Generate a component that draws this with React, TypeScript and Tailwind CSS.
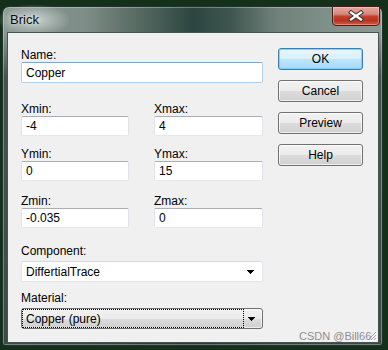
import React from "react";

const Arrow = () => (
  <svg width="7" height="4" viewBox="0 0 7 4" shapeRendering="crispEdges">
    <rect x="0" y="0" width="7" height="1" fill="#000" />
    <rect x="1" y="1" width="5" height="1" fill="#000" />
    <rect x="2" y="2" width="3" height="1" fill="#000" />
    <rect x="3" y="3" width="1" height="1" fill="#000" />
  </svg>
);

const Label = ({ children }: { children: React.ReactNode }) => (
  <div className="h-[14px] leading-[14px] whitespace-nowrap">{children}</div>
);

const TextBox = ({ value }: { value: string }) => (
  <div className="h-[20px] w-full bg-white rounded-[2px] border border-[#e2e3ea] border-t-[#abadb3] border-b-[#e3e9ef] flex items-center pl-[4px]">
    {value}
  </div>
);

const NormalButton = ({ children }: { children: React.ReactNode }) => (
  <div className="h-[22px] w-[85px] rounded-[3px] border border-[#707070] bg-[image:linear-gradient(180deg,#f2f2f2_0%,#ebebeb_50%,#dddddd_50%,#cfcfcf_100%)] shadow-[inset_0_0_0_1px_rgba(255,255,255,0.7)] flex items-center justify-center">
    {children}
  </div>
);

export default function App() {
  return (
    <div className="w-[388px] h-[350px] bg-[#15301a] relative overflow-hidden font-['Liberation_Sans',Arial,sans-serif] text-[12px] text-black pt-[6px] pl-[2px]">
      <div className="w-[381px] h-[340px] rounded-t-[7px] rounded-b-[3px] border border-[#22332c] bg-[image:linear-gradient(180deg,rgba(0,0,0,0)_0px,rgba(0,0,0,0)_26px,rgba(38,56,48,0.7)_70px,rgba(38,56,48,0.8)_100%),linear-gradient(90deg,#8a9893_0%,#7d8c86_22%,#50655d_38%,#2c4540_50%,#3e564f_60%,#6f817a_72%,#7f8f89_85%,#8c9a95_100%)] shadow-[inset_0_0_0_1px_rgba(255,255,255,0.3)] flex flex-col relative">
        {/* title bar */}
        <div className="h-[25px] relative shrink-0">
          <div className="absolute left-[-4px] top-[-2px] w-[70px] h-[30px] bg-[image:radial-gradient(ellipse_at_center,rgba(225,232,229,0.75)_0%,rgba(200,210,206,0.4)_45%,rgba(200,210,206,0)_75%)]" />
          <span className="absolute left-[7px] top-[5px] text-[13px] leading-[16px] text-[#0c0c0c] [text-shadow:0_0_4px_rgba(255,255,255,0.8)]">
            Brick
          </span>
          <div className="absolute right-[2px] top-[-1px] w-[48px] h-[20px] rounded-b-[4px] border border-[#4a1e17] bg-[image:linear-gradient(180deg,#e3aaa1_0%,#d6867a_40%,#c4412e_52%,#b73421_75%,#cf5c46_100%)] shadow-[inset_0_0_0_1px_rgba(255,230,225,0.35)] flex items-center justify-center">
            <svg width="16" height="12" viewBox="0 0 16 12">
              <path d="M3 2.5L13 9.5M3 9.5L13 2.5" stroke="#3a3a3a" strokeWidth="4.2" strokeLinecap="square" />
              <path d="M3 2.5L13 9.5M3 9.5L13 2.5" stroke="#ffffff" strokeWidth="2.2" strokeLinecap="square" />
            </svg>
          </div>
        </div>

        {/* client area */}
        <div className="ml-[4px] w-[372px] h-[311px] border border-[#46554f] bg-[#f0f0f0] flex pl-[13px] pt-[15px] relative">
          {/* left column */}
          <div className="w-[242px] flex flex-col">
            <Label>Name:</Label>
            <div className="h-[21px] w-full bg-white rounded-[2px] border border-[#b5cfe7] border-t-[#7ea5cb] flex items-center pl-[4px]">
              Copper
            </div>

            <div className="grid grid-cols-[108px_109px] gap-x-[25px] mt-[19px]">
              <div>
                <Label>Xmin:</Label>
                <TextBox value="-4" />
              </div>
              <div>
                <Label>Xmax:</Label>
                <TextBox value="4" />
              </div>
              <div className="mt-[11px]">
                <Label>Ymin:</Label>
                <TextBox value="0" />
              </div>
              <div className="mt-[11px]">
                <Label>Ymax:</Label>
                <TextBox value="15" />
              </div>
              <div className="mt-[13px]">
                <Label>Zmin:</Label>
                <TextBox value="-0.035" />
              </div>
              <div className="mt-[13px]">
                <Label>Zmax:</Label>
                <TextBox value="0" />
              </div>
            </div>

            <div className="mt-[16px]">
              <Label>Component:</Label>
            </div>
            <div className="mt-[3px] h-[21px] w-full bg-white rounded-[2px] border border-[#e2e3ea] border-t-[#d5d8de] flex items-center pl-[4px] pr-[8px]">
              <span className="flex-1">DiffertialTrace</span>
              <Arrow />
            </div>

            <div className="mt-[9px]">
              <Label>Material:</Label>
            </div>
            <div className="mt-[3px] h-[21px] w-full rounded-[3px] border border-[#707070] bg-[image:linear-gradient(180deg,#f2f2f2_0%,#ebebeb_50%,#dddddd_50%,#cfcfcf_100%)] shadow-[inset_0_0_0_1px_rgba(255,255,255,0.6)] flex items-center pr-[7px]">
              <div className="ml-[0px] h-[19px] w-[222px] border border-dotted border-black flex items-center pl-[3px]">
                Copper (pure)
              </div>
              <div className="flex-1 flex justify-end">
                <Arrow />
              </div>
            </div>
          </div>

          {/* right column: buttons */}
          <div className="ml-[15px] flex flex-col gap-[10px]">
            <div className="h-[22px] w-[85px] rounded-[3px] border border-[#3c7fb1] bg-[image:linear-gradient(180deg,#eaf6fd_0%,#d9f0fc_50%,#bee6fd_50%,#a7d9f5_100%)] shadow-[inset_0_0_0_1px_rgba(120,200,240,0.8)] flex items-center justify-center">
              OK
            </div>
            <NormalButton>Cancel</NormalButton>
            <NormalButton>Preview</NormalButton>
            <NormalButton>Help</NormalButton>
          </div>

          {/* size grip */}
          <svg className="absolute right-[1px] bottom-[1px]" width="10" height="10" viewBox="0 0 10 10">
            <path d="M9 1L1 9M9 4L4 9M9 7L7 9" stroke="#a0a0a0" strokeWidth="1" />
            <path d="M10 2L2 10M10 5L5 10M10 8L8 10" stroke="#ffffff" strokeWidth="1" />
          </svg>
        </div>
      </div>

      {/* watermark */}
      <div className="absolute left-[299px] top-[330px] text-[11px] leading-[12px] text-[#8f8f8f] whitespace-nowrap">
        CSDN @Bill66
      </div>
    </div>
  );
}
